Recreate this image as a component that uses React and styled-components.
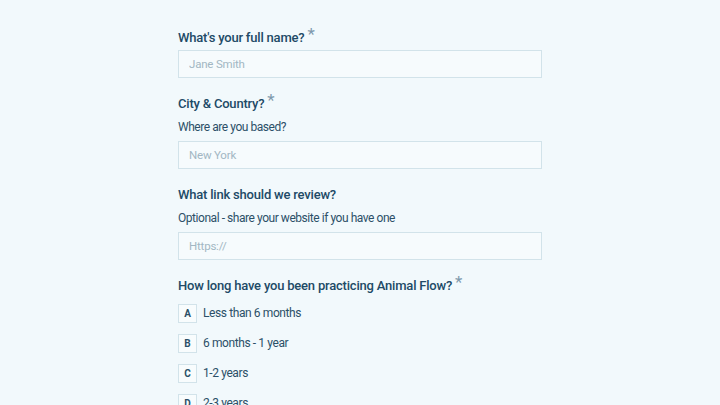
import React from "react";
import styled, { createGlobalStyle } from "styled-components";

const Global = createGlobalStyle`
  html, body { margin: 0; padding: 0; background: #f2f9fc; }
  body { font-family: Roboto, "Liberation Sans", Arial, sans-serif; overflow: hidden; }
`;

const Page = styled.div`
  width: 720px;
  height: 405px;
  overflow: hidden;
  background: #f2f9fc;
  display: flex;
  justify-content: center;
`;

const Column = styled.div`
  width: 364px;
  padding-top: 28px;
  display: flex;
  flex-direction: column;
`;

const Question = styled.div`
  display: flex;
  flex-direction: column;
  margin-bottom: 16px;
`;

const Label = styled.div`
  font-size: 13px;
  line-height: 20px;
  font-weight: 500;
  letter-spacing: -0.2px;
  color: #214a66;
`;

const Star = styled.span`
  color: #7f9aad;
  font-size: 17px;
  line-height: 0;
  font-weight: 400;
  margin-left: 3px;
  position: relative;
  top: -2px;
`;

const Hint = styled.div`
  font-size: 12px;
  line-height: 18px;
  letter-spacing: -0.45px;
  color: #2c5068;
  margin-top: 4px;
`;

const Input = styled.input`
  box-sizing: border-box;
  display: block;
  height: 28px;
  width: 364px;
  margin: ${(p) => (p.$afterHint ? "5px" : "2px")} 0 0;
  border: 1px solid #d2e3ea;
  background: #f6fbfd;
  padding: 0 10px;
  font-family: inherit;
  font-size: 11.5px;
  letter-spacing: -0.2px;
  color: #2c5068;
  outline: none;
  &::placeholder { color: #a2b7c3; }
`;

const Options = styled.div`
  display: flex;
  flex-direction: column;
  gap: 12px;
  margin-top: 8px;
`;

const Option = styled.div`
  display: flex;
  align-items: center;
  gap: 6px;
  height: 18px;
`;

const Key = styled.span`
  box-sizing: border-box;
  width: 19px;
  height: 19px;
  border: 1px solid #d2e3ea;
  background: #f8fcfd;
  display: flex;
  align-items: center;
  justify-content: center;
  font-size: 10px;
  font-weight: 700;
  color: #2c5068;
`;

const OptionText = styled.span`
  font-size: 12px;
  letter-spacing: -0.4px;
  color: #2c5068;
`;

const options = [
  ["A", "Less than 6 months"],
  ["B", "6 months - 1 year"],
  ["C", "1-2 years"],
  ["D", "2-3 years"],
];

export default function App() {
  return (
    <Page>
      <Global />
      <Column>
        <Question>
          <Label>What's your full name?<Star>*</Star></Label>
          <Input placeholder="Jane Smith" />
        </Question>
        <Question>
          <Label>City &amp; Country?<Star>*</Star></Label>
          <Hint>Where are you based?</Hint>
          <Input $afterHint placeholder="New York" />
        </Question>
        <Question>
          <Label>What link should we review?</Label>
          <Hint>Optional - share your website if you have one</Hint>
          <Input $afterHint placeholder="Https://" />
        </Question>
        <Question>
          <Label>How long have you been practicing Animal Flow?<Star>*</Star></Label>
          <Options>
            {options.map(([k, t]) => (
              <Option key={k}>
                <Key>{k}</Key>
                <OptionText>{t}</OptionText>
              </Option>
            ))}
          </Options>
        </Question>
      </Column>
    </Page>
  );
}
